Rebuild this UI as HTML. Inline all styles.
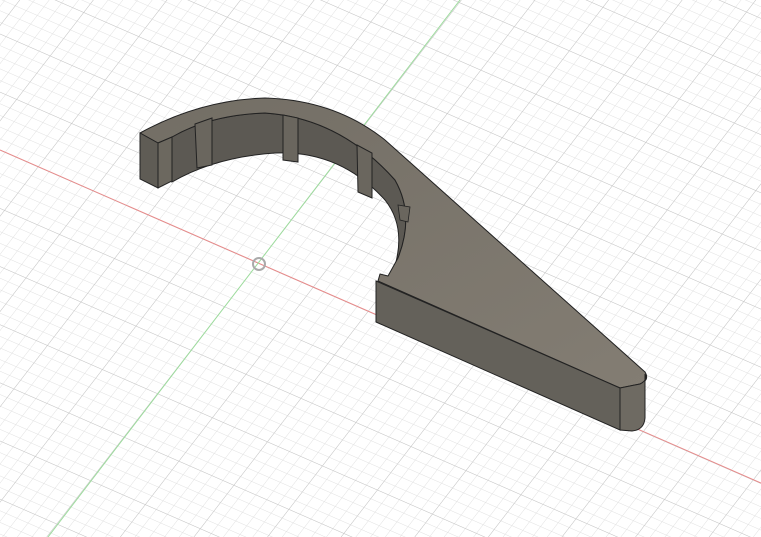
<!DOCTYPE html>
<html><head><style>html,body{margin:0;padding:0;background:#fff;overflow:hidden}svg{display:block}</style></head>
<body>
<svg width="761" height="537" viewBox="0 0 761 537" xmlns="http://www.w3.org/2000/svg">
<defs>
<pattern id="minor" width="11" height="11" patternUnits="userSpaceOnUse" patternTransform="matrix(1,0.438,-0.61,0.79,258,263)">
<path d="M0 0H11M0 0V11" stroke="#e0e0e0" stroke-width="0.9" fill="none"/>
</pattern>
<pattern id="major" width="55" height="55" patternUnits="userSpaceOnUse" patternTransform="matrix(1,0.438,-0.61,0.79,258,263)">
<path d="M0 0H55M0 0V55" stroke="#c6c6c6" stroke-width="0.9" fill="none"/>
</pattern>
<linearGradient id="top" x1="0" y1="0" x2="1" y2="1">
<stop offset="0" stop-color="#736e65"/><stop offset="1" stop-color="#837d73"/>
</linearGradient>
</defs>
<rect width="761" height="537" fill="#fff"/>
<rect width="761" height="537" fill="url(#minor)"/>
<rect width="761" height="537" fill="url(#major)"/>
<line x1="0" y1="150" x2="761" y2="483" stroke="#e88a8a" stroke-width="1"/>
<line x1="460" y1="0" x2="48" y2="537" stroke="#9ddc9d" stroke-width="1"/>
<circle cx="259" cy="264" r="6" fill="none" stroke="#aaa" stroke-width="2"/>
<!-- inner wall -->
<path d="M172 137 Q210 115 265 113 Q340 118 395 180 Q415 215 398 258 L396 262 Q405 225 385 200 Q340 150 275 153 Q215 157 172 182 Z" fill="#5c5953" stroke="#222" stroke-width="1"/>
<!-- top face -->
<path d="M140 133 Q200 100 265 98 Q335 100 385 140 L645 372 Q650 380 640 384 L620 388 L378 281 L380 274 L388 276 L398 258 Q415 215 395 180 Q340 118 265 113 Q210 115 172 137 L158 143 Z" fill="url(#top)" stroke="#222" stroke-width="1" stroke-linejoin="round"/>
<!-- notches -->
<path d="M195 124 L212 118 L212 165 L197 168 Z" fill="#6a665e" stroke="#222" stroke-width="1"/>
<path d="M283 115 L298 118 L298 162 L283 160 Z" fill="#6a665e" stroke="#222" stroke-width="1"/>
<path d="M357 145 L372 153 L372 198 L358 192 Z" fill="#6a665e" stroke="#222" stroke-width="1"/>
<path d="M398 205 L410 207 L408 222 L400 220 Z" fill="#6a665e" stroke="#222" stroke-width="0.8"/>
<!-- left end -->
<path d="M140 133 L158 143 L158 188 L140 179 Z" fill="#5f5c55" stroke="#222" stroke-width="1"/>
<path d="M158 143 L172 137 L172 181 L158 188 Z" fill="#6c685f" stroke="#222" stroke-width="1"/>
<!-- front face -->
<path d="M376 281 L620 388 L620 430 L376 322 Z" fill="#64615a" stroke="#222" stroke-width="1"/>
<path d="M620 388 L640 384 Q648 380 645 374 L645 418 Q644 430 632 431 L620 430 Z" fill="#6e6a62" stroke="#222" stroke-width="1"/>
</svg>
</body></html>
